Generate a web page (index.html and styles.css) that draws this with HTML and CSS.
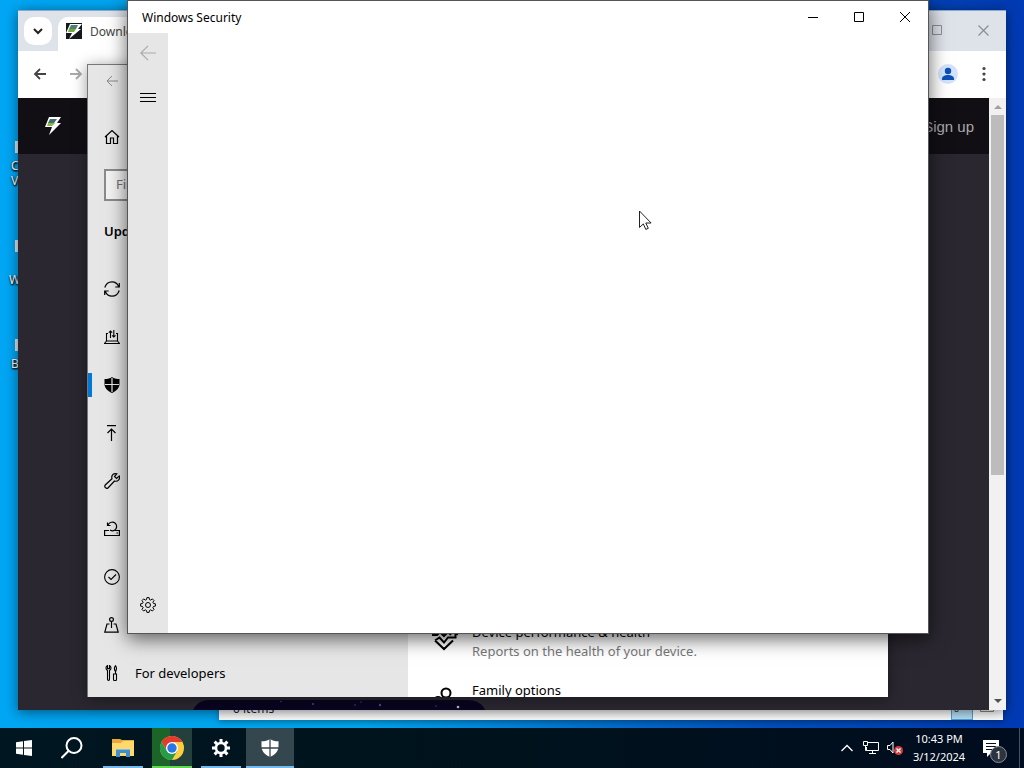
FILE: index.html
```html
<!DOCTYPE html>
<html lang="en">
<head>
<meta charset="UTF-8">
<meta name="viewport" content="width=device-width, initial-scale=1.0">
<title>Desktop</title>
<link rel="stylesheet" href="styles.css">
</head>
<body>
<main class="desktop">
  <!-- Desktop shortcuts -->
  <div class="shortcut shortcut-c"><i></i><span>C</span><span>V</span></div>
  <div class="shortcut shortcut-w"><i></i><span>W</span></div>
  <div class="shortcut shortcut-b"><i></i><span>B</span></div>

  <!-- File explorer -->
  <section class="window explorer">
    <span>0 items</span>
    <div class="views">
      <button class="view active" aria-label="Details view">
        <svg width="16" height="8" viewBox="0 0 16 8" fill="none" stroke="#456"><path d="M1 1.5h3v4h-3zM6 3.5h4M12 3.5h4"/></svg>
      </button>
      <button class="view" aria-label="Large icons view">
        <svg width="14" height="8" viewBox="0 0 14 8" fill="none" stroke="#888"><path d="M.5 0v5.500h13V0M3 2.500h8"/></svg>
      </button>
    </div>
  </section>

  <!-- Browser -->
  <section class="window browser">
    <div class="tabs">
      <button class="tab-search" aria-label="Search tabs">
        <svg width="12" height="12" viewBox="0 0 12 12" fill="none" stroke="#222" stroke-width="2"><path d="M2 4l4 4 4-4"/></svg>
      </button>
      <div class="tab">
        <svg width="16" height="16" viewBox="0 0 16 16"><path fill="#15171a" d="M0 0h16v16H0z"/><path fill="#fff" d="M4 1h12l-4 5h3L3 16l3-6H0z"/><path fill="#4d7f74" d="M5 2h7l-2 4H3z"/><path fill="#72a83c" d="M3 6h7L8 9H2z"/></svg>
        <span>Downloads</span>
      </div>
      <div class="browser-buttons">
        <button aria-label="Maximize"><svg width="10" height="10" viewBox="0 0 10 10" fill="none" stroke="#8b8e96"><path d="M.5.5h9v9h-9z"/></svg></button>
        <button aria-label="Close"><svg width="11" height="11" viewBox="0 0 11 11" fill="none" stroke="#8b8e96" stroke-width="1.200"><path d="M.5.5l10 10M10.500.5l-10 10"/></svg></button>
      </div>
    </div>
    <div class="toolbar">
      <button aria-label="Back"><svg width="14" height="12" viewBox="0 0 14 12" fill="none" stroke="#444" stroke-width="1.800"><path d="M13 6H2M7 1L2 6l5 5"/></svg></button>
      <button aria-label="Forward"><svg width="14" height="12" viewBox="0 0 14 12" fill="none" stroke="#aaa" stroke-width="1.800"><path d="M1 6h11M7 1l5 5-5 5"/></svg></button>
      <button class="profile" aria-label="Profile">
        <svg width="20" height="20" viewBox="0 0 20 20"><circle cx="10" cy="10" r="10" fill="#d3e3fd"/><circle cx="10" cy="7" r="3.200" fill="#0b4fb8"/><path fill="#0b4fb8" d="M4 16v-1c0-3 3-4 6-4s6 1 6 4v1z"/></svg>
      </button>
      <button aria-label="Menu"><svg width="4" height="16" viewBox="0 0 4 16" fill="#444"><circle cx="2" cy="2.500" r="1.600"/><circle cx="2" cy="8" r="1.600"/><circle cx="2" cy="13.500" r="1.600"/></svg></button>
    </div>
    <div class="page">
      <div class="site">
        <header class="site-header">
          <svg width="18" height="18" viewBox="0 0 18 18"><path fill="#fff" d="M5 0h12l-4 6h4L5 18l3-8H1z"/><path fill="#426f72" d="M6 2h7l-3 4H4z"/><path fill="#8cb448" d="M4 6h7L8 9H3z"/></svg>
          <a href="#">Sign up</a>
        </header>
        <div class="site-image">
          <svg width="292" height="10" viewBox="0 0 292 10"><path fill="#090420" d="M0 10C3 4 8 0 16 0h258c9 0 16 4 18 10z"/><g fill="#51477a"><circle cx="88" cy="1.500" r=".8"/><circle cx="120" cy="4" r="1"/><circle cx="162" cy="5" r=".8"/><circle cx="168" cy="2" r=".7"/><circle cx="187" cy="5" r="1.200"/><circle cx="243" cy="6" r=".7"/></g><circle cx="265" cy="7" r="1.300" fill="#a9b7cf"/></svg>
        </div>
      </div>
      <div class="scrollbar">
        <svg width="8" height="5" viewBox="0 0 8 5" fill="#a0a0a0"><path d="M0 5l4-4 4 4z"/></svg>
        <div class="thumb"></div>
        <svg width="8" height="5" viewBox="0 0 8 5" fill="#505050"><path d="M0 0l4 4 4-4z"/></svg>
      </div>
    </div>
  </section>

  <!-- Settings -->
  <section class="window settings">
    <aside class="settings-side">
      <button class="settings-back" aria-label="Back"><svg width="12" height="12" viewBox="0 0 12 12" fill="none" stroke="#888"><path d="M12 6H1M6 1L1 6l5 5"/></svg></button>
      <a class="side-link home" href="#">
        <svg width="16" height="16" viewBox="0 0 16 16" fill="none" stroke="#000" stroke-width="1.200"><path d="M1 8l7-6.500L15 8M2.500 7v7.500h4V9h3v5.500h4V7"/></svg>
        <span>Home</span>
      </a>
      <input class="find" type="text" placeholder="Find a setting" aria-label="Find a setting">
      <h2>Update &amp; Security</h2>
      <nav>
        <a class="side-link" href="#">
          <svg width="16" height="16" viewBox="0 0 16 16" fill="none" stroke="#000" stroke-width="1.200"><path d="M.8 6.500C2 2.500 5 .8 8 .8c3 0 5.500 1.700 6.800 5M15.300 2v4h-4M15.200 9.500c-1.200 4-4.200 5.700-7.200 5.700-3 0-5.500-1.700-6.800-5M.7 14v-4h4"/></svg>
          <span>Windows Update</span>
        </a>
        <a class="side-link" href="#">
          <svg width="16" height="16" viewBox="0 0 16 16" fill="none" stroke="#000" stroke-width="1.100"><path d="M4 4.500H2.500v7.500h11V4.500H12M2.500 12l-2 2.500h15l-2-2.500M6.500 9V2M4.800 3.700l1.700-1.700 1.700 1.700M9.800 1v7M8.100 6.300l1.700 1.700 1.700-1.700"/></svg>
          <span>Delivery Optimization</span>
        </a>
        <a class="side-link current" href="#">
          <svg width="16" height="16" viewBox="0 0 16 16"><path fill="#000" d="M8 0c2 1.500 4 2 7.500 2v5c0 4-3 7-7.500 9C3.500 14 .5 11 .5 7V2C4 2 6 1.500 8 0z"/><path stroke="#e6e6e6" stroke-width="1.200" d="M8 1v14M1 7.500h14"/></svg>
          <span>Windows Security</span>
        </a>
        <a class="side-link" href="#">
          <svg width="16" height="16" viewBox="0 0 16 16" fill="none" stroke="#000" stroke-width="1.200"><path d="M3 .6h9M7.500 16V4M3.500 8l4-4 4 4"/></svg>
          <span>Backup</span>
        </a>
        <a class="side-link" href="#">
          <svg width="16" height="16" viewBox="0 0 16 16" fill="none" stroke="#000" stroke-width="1.200"><path d="M12.800.9C9.500-.2 7 2.500 8 5.700L1.200 12c-1.300 1.800 1 4.500 3 2.700L10.500 8c3 1 6-1.500 4.700-5l-2.700 2.500-2-2z"/></svg>
          <span>Troubleshoot</span>
        </a>
        <a class="side-link" href="#">
          <svg width="16" height="16" viewBox="0 0 16 16" fill="none" stroke="#000" stroke-width="1.200"><path d="M5 9.500H.6v5h14.800v-5H11M12.500 12H14M3.500 1.500v3h3M4 4C5.500 1 9 .3 11 2c2.500 2 2 6-.5 7.300-1.200.6-3 .6-4.500-.3"/></svg>
          <span>Recovery</span>
        </a>
        <a class="side-link" href="#">
          <svg width="16" height="16" viewBox="0 0 16 16" fill="none" stroke="#000" stroke-width="1.100"><circle cx="8" cy="8" r="7.400"/><path d="M4.500 8l2.500 2.500 5-5"/></svg>
          <span>Activation</span>
        </a>
        <a class="side-link" href="#">
          <svg width="16" height="16" viewBox="0 0 16 16" fill="none" stroke="#000" stroke-width="1.200"><circle cx="7.500" cy="2.500" r="1.900"/><path d="M7.500 4.500V11M5.500 7H3L.8 15.200h13.400L12 7H9.500"/></svg>
          <span>Find my device</span>
        </a>
        <a class="side-link" href="#">
          <svg width="16" height="16" viewBox="0 0 16 16" fill="none" stroke="#000" stroke-width="1.100"><path d="M3.500.6v3h2v-3c2 1 2 4 0 5v8.500c0 1.800-2 1.800-2 0V5.600c-2-1-2-4 0-5zM11.500.6c-1.500 2-1.500 4 0 6V9h-2v5.500c0 1.500 3 1.500 3 0V9h-1M11.500.6c1.300 2 1.300 4 0 6"/></svg>
          <span>For developers</span>
        </a>
      </nav>
    </aside>
    <div class="settings-content">
      <ul class="areas">
        <li>
          <svg width="26" height="26" viewBox="0 0 26 26" fill="none" stroke="#000" stroke-width="2"><path d="M1 9C0 3 7-1 13 4c6-5 13-1 12 5M0 9h5l3-3 4 4 4-4 3 3M3 14.500l9 8.500 9-8.500M3 14.500l4.500-3 4.500 5 4-5h7.500V8"/></svg>
          <div><h3>Device performance &amp; health</h3><p>Reports on the health of your device.</p></div>
        </li>
        <li>
          <svg width="26" height="26" viewBox="0 0 26 26" fill="none" stroke="#000" stroke-width="2"><circle cx="14" cy="9" r="4.500"/><circle cx="6" cy="16" r="3"/><path d="M8 25c0-7 3-10 6-10s7 3 7 10"/></svg>
          <div><h3>Family options</h3></div>
        </li>
      </ul>
    </div>
  </section>

  <!-- Windows Security -->
  <section class="window security">
    <header class="titlebar">
      <h1>Windows Security</h1>
      <div class="window-buttons">
        <button aria-label="Minimize"><svg width="10" height="10" viewBox="0 0 10 10" stroke="#000"><path d="M0 5.500h10"/></svg></button>
        <button aria-label="Maximize"><svg width="10" height="10" viewBox="0 0 10 10" fill="none" stroke="#000"><path d="M.5.5h9v9h-9z"/></svg></button>
        <button aria-label="Close"><svg width="10" height="10" viewBox="0 0 10 10" stroke="#000"><path d="M0 0l10 10M10 0L0 10"/></svg></button>
      </div>
    </header>
    <div class="security-body">
      <nav class="security-nav">
        <button aria-label="Back"><svg width="16" height="16" viewBox="0 0 16 16" fill="none" stroke="#aaa" stroke-width="1.200"><path d="M16 8H1M8 .8L.8 8 8 15.200"/></svg></button>
        <button aria-label="Open navigation"><svg width="16" height="10" viewBox="0 0 16 10" stroke="#000"><path d="M0 1.500h16M0 5.500h16M0 9.500h16"/></svg></button>
        <button class="gear" aria-label="Settings"><svg width="16" height="16" viewBox="0 0 16 16" fill="none" stroke="#000"><path d="M6.900.6h2.200l.4 2 1.200.5 1.700-1.200 1.600 1.600-1.100 1.700.5 1.200 2 .4v2.300l-2 .4-.5 1.200 1.100 1.700-1.600 1.600-1.700-1.100-1.200.5-.4 2H6.900l-.4-2-1.200-.5L3.600 14 2 12.400l1.100-1.700-.5-1.200-2-.4V6.800l2-.4.5-1.200L2 3.500l1.600-1.600 1.700 1.200 1.200-.5z"/><circle cx="8" cy="8" r="2.500"/></svg></button>
      </nav>
      <div class="security-page"></div>
    </div>
  </section>

  <svg class="cursor" width="13" height="21" viewBox="0 0 13 21" fill="#fff" stroke="#222"><path d="M.5 1v16.500l3.800-3.600 2.500 5.500 2.500-1.100-2.500-5.300h5.300z"/></svg>
</main>

<footer class="taskbar">
  <button class="task" aria-label="Start"><svg width="16" height="16" viewBox="0 0 16 16" fill="#fff"><path d="M0 2.200l7-1v6.300H0zM8 1l8-1v7.500H8zM0 8.500h7v6.300l-7-1zM8 8.500h8V16l-8-1z"/></svg></button>
  <button class="task" aria-label="Search"><svg width="22" height="22" viewBox="0 0 22 22" fill="none" stroke="#fff" stroke-width="2"><circle cx="13" cy="8.500" r="7.500"/><path d="M7.500 14l-7 7"/></svg></button>
  <div class="apps">
    <button class="task open" aria-label="File Explorer"><svg width="22" height="20" viewBox="0 0 22 20"><path fill="#e9a93a" d="M0 1h8l2 1h12v16H0z"/><path fill="#ffd96e" d="M0 5h9l2-2h11v15H0z"/><path fill="#3e8fd0" d="M4 11h14v8h-4v-4H8v4H4z"/><path fill="#83bde8" d="M4 11h14v1H4z"/></svg></button>
    <button class="task open chrome" aria-label="Google Chrome"><svg width="24" height="24" viewBox="0 0 24 24"><circle cx="12" cy="12" r="12" fill="#ffcd40"/><path fill="#e33b2e" d="M1.600 6A12 12 0 0 1 22.400 6H12L7 15z"/><path fill="#249c4a" d="M1.600 6A12 12 0 0 0 12 24l5.200-9H12L6.800 15z"/><circle cx="12" cy="12" r="6" fill="#fff"/><circle cx="12" cy="12" r="4.700" fill="#2877e8"/></svg></button>
    <button class="task open" aria-label="Settings"><svg width="18" height="18" viewBox="0 0 18 18" fill="none" stroke="#fff"><circle cx="9" cy="9" r="5" stroke-width="2.600"/><path stroke-width="3" d="M9 0v3.500M9 14.500V18M0 9h3.500M14.500 9H18M2.600 2.600l2.500 2.500M12.900 12.900l2.500 2.500M2.600 15.400l2.500-2.500M12.900 5.100l2.500-2.500"/></svg></button>
    <button class="task open active" aria-label="Windows Security"><svg width="18" height="18" viewBox="0 0 18 18"><path fill="#fff" d="M9 0c2 1.500 5 2.300 8.500 2.300V7c0 5-3 8.500-8.500 11C3.500 15.500.5 12 .5 7V2.300C4 2.300 7 1.500 9 0z"/><path stroke="#34474f" stroke-width="1.300" d="M9 0v18M0 9h18"/></svg></button>
  </div>
  <div class="tray">
    <button class="tray-icon" aria-label="Show hidden icons"><svg width="12" height="8" viewBox="0 0 12 8" fill="none" stroke="#fff" stroke-width="1.300"><path d="M.5 7L6 1.500 11.500 7"/></svg></button>
    <button class="tray-icon" aria-label="Network"><svg width="16" height="14" viewBox="0 0 16 14" fill="none" stroke="#fff"><path d="M5 1.500h10.500v8h-12V6M.5.500h4v4h-4zM2.500 4.500v5h1M9.500 9.500v3M6 12.500h7"/></svg></button>
    <button class="tray-icon" aria-label="Sound muted"><svg width="16" height="14" viewBox="0 0 16 14"><path fill="none" stroke="#fff" d="M.5 4.500h2.500L6 1v11L3 8.500H.5z"/><circle cx="11.500" cy="9.500" r="4.500" fill="#d23b3b"/><path stroke="#fff" stroke-width="1.300" d="M9.500 7.500l4 4M13.500 7.500l-4 4"/></svg></button>
    <button class="clock"><span>10:43 PM</span><span>3/12/2024</span></button>
    <button class="notifications" aria-label="Notifications">
      <svg width="16" height="17" viewBox="0 0 16 17"><path fill="#fff" d="M0 0h16v13H8l-4 4v-4H0z"/><path stroke="#00101c" d="M3 3.500h10M3 6.500h10M3 9.500h7"/></svg>
      <span class="badge">1</span>
    </button>
    <button class="show-desktop" aria-label="Show desktop"></button>
  </div>
</footer>
</body>
</html>
```
FILE: styles.css
```css
* {
  box-sizing: border-box;
}

body {
  margin: 0;
  height: 100vh;
  display: flex;
  flex-direction: column;
  overflow: hidden;
  font-family: "Noto Sans", "Open Sans", sans-serif;
  font-size: 12px;
  color: #000;
}

button {
  display: flex;
  align-items: center;
  justify-content: center;
  margin: 0;
  padding: 0;
  border: none;
  background: none;
  color: inherit;
  font: inherit;
}

a {
  color: inherit;
  text-decoration: none;
}

h1,
h2,
h3,
p {
  margin: 0;
  font-size: inherit;
  font-weight: normal;
}

svg {
  flex: none;
}

.desktop {
  position: relative;
  flex: 1;
  overflow: hidden;
  background: linear-gradient(90deg, #00a6f4 0%, #00a6ee 35%, #0078d2 55%, #0050bd 75%, #003ab4 100%);
}

/* Desktop shortcuts */
.shortcut {
  position: absolute;
  left: 9px;
  width: 40px;
  display: flex;
  flex-direction: column;
  color: #fff;
  line-height: 15px;
  text-shadow: 0 1px 2px #000, 1px 1px 2px #000;
}

.shortcut i {
  width: 20px;
  height: 12px;
  margin: 0 0 5px 6px;
  background: #dce8f0;
}

.shortcut-c {
  top: 141px;
}

.shortcut-w {
  top: 240px;
}

.shortcut-w i {
  margin-bottom: 20px;
}

.shortcut-b {
  top: 339px;
}

.shortcut-c span,
.shortcut-b span {
  padding-left: 2px;
}

/* Windows */
.window {
  position: absolute;
  display: flex;
  overflow: hidden;
}

.explorer {
  left: 219px;
  right: 21px;
  top: 40px;
  bottom: 8px;
  align-items: flex-end;
  justify-content: space-between;
  padding-left: 14px;
  line-height: 22px;
  color: #223;
  background: #fff;
  box-shadow: 0 2px 6px rgba(0, 0, 0, 0.3);
}

.views {
  display: flex;
  gap: 4px;
  padding-right: 6px;
}

.view {
  width: 20px;
  height: 16px;
  padding-bottom: 4px;
}

.view.active {
  width: 22px;
  border: 1px solid #4aa5d8;
  background: #b8e1f6;
}

.browser {
  left: 18px;
  right: 18px;
  top: 10px;
  bottom: 18px;
  flex-direction: column;
  background: #fff;
  border-top: 1px solid #8aa8c8;
  box-shadow: 0 2px 12px rgba(0, 0, 0, 0.5);
}

.tabs {
  display: flex;
  align-items: flex-end;
  height: 40px;
  padding-left: 6px;
  background: #dee2e9;
}

.tab-search {
  width: 28px;
  height: 28px;
  margin: 0 6px 6px 0;
  border-radius: 10px;
  background: #fff;
}

.tab {
  display: flex;
  align-items: center;
  gap: 8px;
  width: 240px;
  height: 34px;
  padding: 0 8px 6px;
  border-radius: 10px 10px 0 0;
  background: #fff;
  color: #444;
}

.browser-buttons {
  display: flex;
  align-self: flex-start;
  margin-left: auto;
}

.browser-buttons button {
  width: 46px;
  height: 38px;
}

.toolbar {
  display: flex;
  align-items: center;
  height: 47px;
  padding: 0 4px 2px;
}

.toolbar button {
  width: 36px;
  height: 36px;
}

.toolbar .profile {
  margin-left: auto;
}

.page {
  display: flex;
  flex: 1;
  min-height: 0;
}

.site {
  display: flex;
  flex: 1;
  flex-direction: column;
  justify-content: space-between;
  background: #2a2730;
}

.site-header {
  display: flex;
  align-items: center;
  justify-content: space-between;
  height: 56px;
  padding: 0 15px 0 26px;
  background: #110f14;
  color: #aaa8ad;
  font: 15px "Liberation Sans", sans-serif;
}

.site-image {
  display: flex;
  padding-left: 175px;
}

.scrollbar {
  display: flex;
  flex-direction: column;
  align-items: center;
  width: 17px;
  padding: 6px 0;
  background: #f1f1f1;
}

.thumb {
  width: 13px;
  height: 60%;
  margin: 6px 0 auto;
  background: #bcbcbc;
}

/* Settings */
.settings {
  left: 87px;
  right: 136px;
  top: 64px;
  bottom: 31px;
  border: 1px solid #77777a;
  border-width: 1px 0 0 1px;
  background: #fff;
  box-shadow: 0 2px 14px rgba(0, 0, 0, 0.4);
  font-size: 13px;
}

.settings-side {
  width: 320px;
  background: #e6e6e6;
}

.settings-back {
  width: 48px;
  height: 32px;
}

.side-link {
  display: flex;
  align-items: center;
  gap: 15px;
  height: 48px;
  padding-left: 16px;
}

.side-link.current {
  background: linear-gradient(#0078d7, #0078d7) left center / 4px 24px no-repeat;
}

.home {
  margin: 16px 0 8px;
}

.find {
  display: block;
  width: 288px;
  height: 32px;
  margin: 0 16px;
  padding: 0 10px 2px;
  border: 2px solid #8a8a8a;
  background: #f2f2f2;
  font: 13px "Noto Sans", sans-serif;
}

.find::placeholder {
  color: #707070;
}

.settings-side h2 {
  padding: 20px 16px 24px;
  font-weight: 600;
  line-height: 20px;
}

.settings-content {
  display: flex;
  flex: 1;
  align-items: flex-end;
}

/* the list runs on below the window edge */
.areas {
  margin: 0 0 -42px;
  padding: 0 0 0 24px;
  list-style: none;
}

.areas li {
  display: flex;
  gap: 14px;
  height: 58px;
  line-height: 19px;
}

.areas svg {
  margin-top: 3px;
}

.areas p {
  color: #777;
}

/* Windows Security */
.security {
  left: 127px;
  right: 95px;
  top: 0;
  bottom: 94px;
  flex-direction: column;
  border: 1px solid #55555a;
  background: #fff;
  box-shadow: 0 5px 18px rgba(0, 0, 0, 0.6);
}

.titlebar {
  display: flex;
  align-items: center;
  justify-content: space-between;
  height: 32px;
  padding-left: 14px;
}

.window-buttons {
  display: flex;
}

.window-buttons button {
  width: 46px;
  height: 32px;
}

.security-body {
  display: flex;
  flex: 1;
}

.security-nav {
  display: flex;
  flex-direction: column;
  gap: 4px;
  width: 40px;
  padding-bottom: 8px;
  background: #e6e6e6;
}

.security-nav button {
  height: 40px;
}

.security-nav .gear {
  margin-top: auto;
}

.security-page {
  flex: 1;
}

.cursor {
  position: absolute;
  left: 639px;
  top: 210px;
}

/* Taskbar */
.taskbar {
  display: flex;
  height: 40px;
  background: linear-gradient(90deg, #001620, #00131d 50%, #000c1f);
  color: #fff;
}

.task {
  width: 48px;
  height: 40px;
}

.apps {
  display: flex;
  gap: 1px;
  margin-left: 3px;
}

.task.open {
  background: linear-gradient(#76b9ed, #76b9ed) center bottom / 40px 2px no-repeat;
}

.task.chrome {
  background:
    linear-gradient(#62d84e, #62d84e) center bottom / 40px 2px no-repeat,
    linear-gradient(90deg, #1c6428 45%, #24403c 45%) center / 40px 40px no-repeat;
}

.task.active {
  background: linear-gradient(#76b9ed, #76b9ed) center bottom / 48px 2px no-repeat #34474f;
}

.tray {
  display: flex;
  margin-left: auto;
}

.tray-icon {
  width: 24px;
}

.clock {
  flex-direction: column;
  width: 56px;
  margin-left: 4px;
  font-size: 11px;
  line-height: 18px;
}

.notifications {
  position: relative;
  width: 48px;
}

.badge {
  position: absolute;
  left: 23px;
  top: 18px;
  width: 17px;
  height: 17px;
  border: 1px solid #8a8f98;
  border-radius: 50%;
  background: #2c3440;
  font-size: 11px;
  line-height: 15px;
}

.show-desktop {
  width: 5px;
  margin-left: 4px;
  border-left: 1px solid #48525c;
}
```
